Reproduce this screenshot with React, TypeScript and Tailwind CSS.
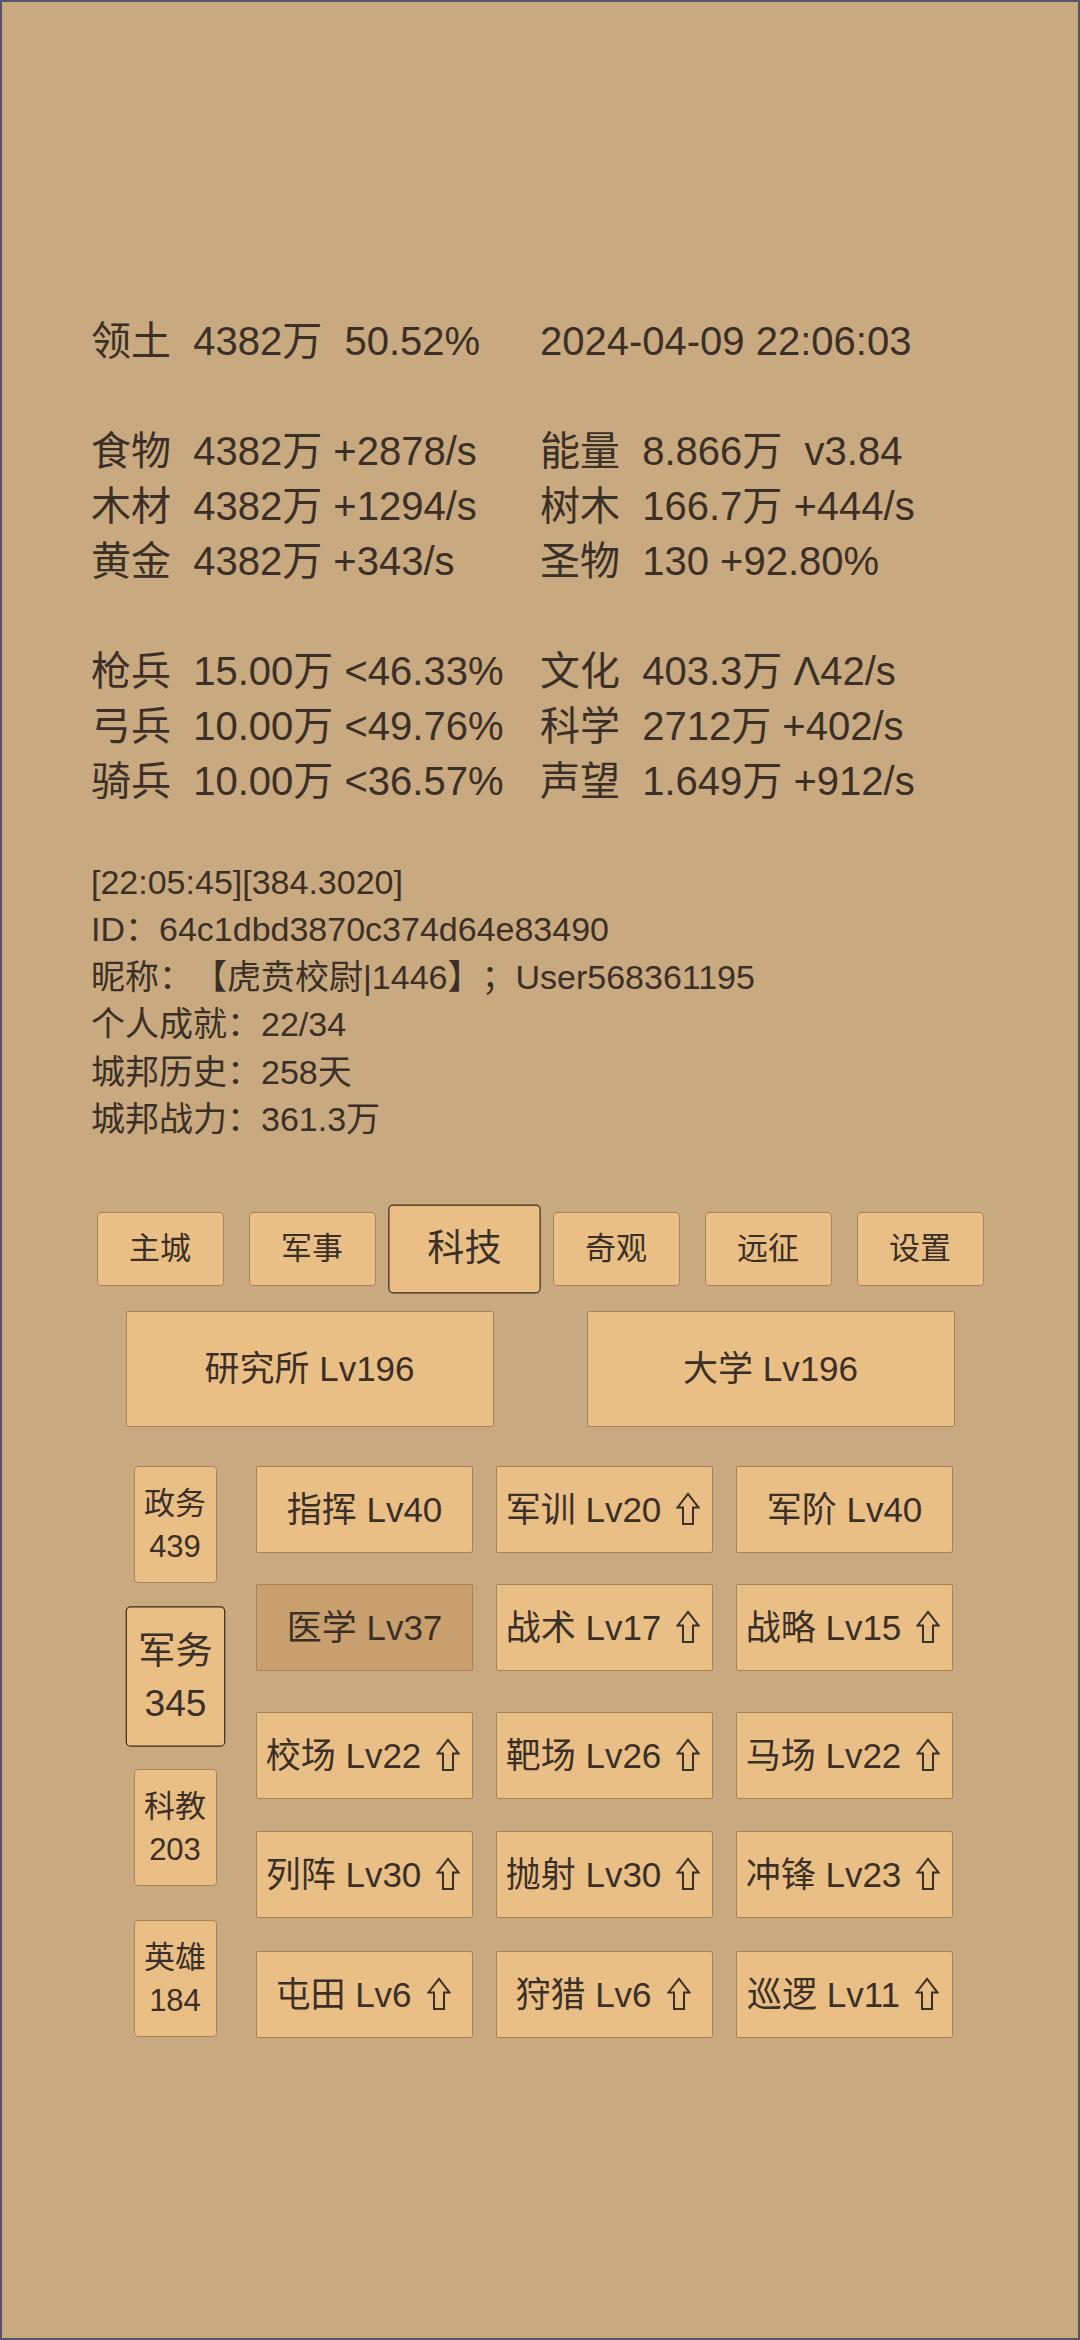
import React from 'react';

const stats: [string, string][][] = [
  [['领土  4382万  50.52%', '2024-04-09 22:06:03']],
  [
    ['食物  4382万 +2878/s', '能量  8.866万  v3.84'],
    ['木材  4382万 +1294/s', '树木  166.7万 +444/s'],
    ['黄金  4382万 +343/s', '圣物  130 +92.80%'],
  ],
  [
    ['枪兵  15.00万 <46.33%', '文化  403.3万 Λ42/s'],
    ['弓兵  10.00万 <49.76%', '科学  2712万 +402/s'],
    ['骑兵  10.00万 <36.57%', '声望  1.649万 +912/s'],
  ],
];

const info = [
  '[22:05:45][384.3020]',
  'ID：64c1dbd3870c374d64e83490',
  '昵称：【虎贲校尉|1446】；User568361195',
  '个人成就：22/34',
  '城邦历史：258天',
  '城邦战力：361.3万',
];

const tabs = ['主城', '军事', '科技', '奇观', '远征', '设置'];
const activeTab = '科技';

const sideTabs = [
  { name: '政务', count: 439 },
  { name: '军务', count: 345 },
  { name: '科教', count: 203 },
  { name: '英雄', count: 184 },
];
const activeSide = '军务';

interface Tech {
  name: string;
  lv: number;
  up: boolean;
  done?: boolean;
}

const techRows: { gap: string; items: Tech[] }[] = [
  {
    gap: 'mt-0',
    items: [
      { name: '指挥', lv: 40, up: false },
      { name: '军训', lv: 20, up: true },
      { name: '军阶', lv: 40, up: false },
    ],
  },
  {
    gap: 'mt-[31px]',
    items: [
      { name: '医学', lv: 37, up: false, done: true },
      { name: '战术', lv: 17, up: true },
      { name: '战略', lv: 15, up: true },
    ],
  },
  {
    gap: 'mt-[41px]',
    items: [
      { name: '校场', lv: 22, up: true },
      { name: '靶场', lv: 26, up: true },
      { name: '马场', lv: 22, up: true },
    ],
  },
  {
    gap: 'mt-[32px]',
    items: [
      { name: '列阵', lv: 30, up: true },
      { name: '抛射', lv: 30, up: true },
      { name: '冲锋', lv: 23, up: true },
    ],
  },
  {
    gap: 'mt-[33px]',
    items: [
      { name: '屯田', lv: 6, up: true },
      { name: '狩猎', lv: 6, up: true },
      { name: '巡逻', lv: 11, up: true },
    ],
  },
];

// hollow "upgrade available" arrow
const UpArrow = () => (
  <svg
    className="inline-block ml-[15px] mr-[3px] w-[24px] h-[33px] align-[-3px]"
    viewBox="0 0 24 33"
    fill="none"
    stroke="currentColor"
    strokeWidth="2"
    strokeLinejoin="miter"
  >
    <path d="M1.5 15.5 L12 1.8 L22.5 15.5 L17 15.5 L17 32 L7 32 L7 15.5 Z" />
  </svg>
);

const App: React.FC = () => {
  return (
    <div className="w-[1080px] h-[2340px] border-2 border-[#55566b] bg-[#c9a97f] text-[#3b3027] [text-spacing-trim:space-all] font-['Liberation_Sans','DejaVu_Sans','Noto_Sans_CJK_SC',sans-serif]">
      {/* resource stats */}
      <div className="pt-[312px] pl-[89px] text-[40px] leading-[55px]">
        {stats.map((group, gi) => (
          <div key={gi} className={gi > 0 ? 'mt-[55px]' : ''}>
            {group.map(([a, b], i) => (
              <div key={i} className="flex whitespace-pre">
                <span className="w-[449px]">{a}</span>
                <span>{b}</span>
              </div>
            ))}
          </div>
        ))}
      </div>

      {/* player info */}
      <div className="mt-[50px] pl-[89px] text-[34px] leading-[47.4px]">
        {info.map((line) => (
          <div key={line}>{line}</div>
        ))}
      </div>

      {/* main tabs */}
      <div className="mt-[62px] flex justify-center">
        {tabs.map((t) => (
          <div key={t} className="w-[152px] h-[88px] flex items-center justify-center">
            <div
              className={`w-[127px] h-[74px] flex items-center justify-center rounded-[4px] bg-[#eabf86] text-[31px] border ${
                t === activeTab ? 'scale-[1.2] border-[#3a2a18]' : 'border-[#a4845a]'
              }`}
            >
              {t}
            </div>
          </div>
        ))}
      </div>

      {/* buildings */}
      <div className="mt-[18px] flex justify-center gap-[93px]">
        {['研究所 Lv196', '大学 Lv196'].map((b) => (
          <div
            key={b}
            className="w-[368px] h-[116px] flex items-center justify-center bg-[#eabf86] border border-[#a4845a] rounded-[2px] text-[35px]"
          >
            {b}
          </div>
        ))}
      </div>

      {/* tech grid */}
      <div className="mt-[39px] flex pl-[123px]">
        <div className="w-[100px] h-[571px] flex flex-col items-center justify-between">
          {sideTabs.map((s) => (
            <div
              key={s.name}
              className={`w-[83px] h-[117px] flex flex-col items-center justify-center rounded-[4px] bg-[#eabf86] border text-[31px] leading-[43px] ${
                s.name === activeSide ? 'scale-[1.2] border-[#3a2a18]' : 'border-[#a4845a]'
              }`}
            >
              <span>{s.name}</span>
              <span>{s.count}</span>
            </div>
          ))}
        </div>
        <div className="ml-[31px] flex flex-col">
          {techRows.map((row, ri) => (
            <div key={ri} className={`flex gap-[23px] ${row.gap}`}>
              {row.items.map((it) => (
                <div
                  key={it.name}
                  className={`w-[217px] h-[87px] flex items-center justify-center whitespace-pre rounded-[2px] border border-[#a4845a] text-[35px] ${
                    it.done ? 'bg-[#c9a06d]' : 'bg-[#eabf86]'
                  }`}
                >
                  <span className="leading-[40px]">
                    {`${it.name} Lv${it.lv}`}
                    {it.up && <UpArrow />}
                  </span>
                </div>
              ))}
            </div>
          ))}
        </div>
      </div>
    </div>
  );
};

export default App;
